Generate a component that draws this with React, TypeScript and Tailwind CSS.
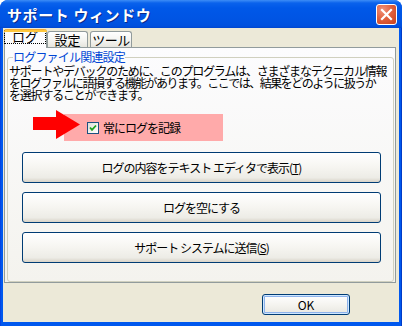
export default function App() {
  const btn =
    "flex items-center justify-center w-[359px] h-[31px] rounded-[3px] border border-[#003C74] bg-[linear-gradient(180deg,#FFFFFF_0%,#F7F6F2_45%,#EDECE6_85%,#D8D3C8_100%)] text-[12px] tracking-[-1px] leading-none text-black";
  return (
    <div className="relative w-[402px] h-[326px] bg-white font-['Noto_Sans_CJK_JP','Noto_Sans',sans-serif] text-black">
      <div className="flex flex-col h-full rounded-t-[8px] overflow-hidden bg-[linear-gradient(90deg,#0831D9_0px,#0058EE_1px,#0058EE_401px,#001EA0_402px)]">
        {/* Title bar */}
        <div className="h-[28px] shrink-0 flex items-center pl-[7px] pr-[5px] bg-[linear-gradient(180deg,#3D8DF6_0px,#0A62EC_3px,#0058E8_8px,#0054E3_20px,#0050DE_26px,#0045CE_28px)]">
          <span className="text-white font-bold text-[15px] leading-none tracking-[0.6px] [text-shadow:1px_1px_0_#0A2A8A]">
            サポート ウィンドウ
          </span>
          <div className="ml-auto w-[21px] h-[21px] rounded-[3px] border border-white bg-[radial-gradient(circle_at_30%_25%,#F0927A_0%,#E2623F_45%,#C8401A_100%)] flex items-center justify-center">
            <svg width="13" height="13" viewBox="0 0 13 13">
              <path d="M2 2 L11 11 M11 2 L2 11" stroke="white" strokeWidth="2.2" strokeLinecap="square" />
            </svg>
          </div>
        </div>
        {/* Body */}
        <div className="flex-1 mx-[3px] mb-[4px] bg-[#ECE9D8] flex flex-col">
          {/* Tabs */}
          <div className="relative z-10 flex items-end h-[19px] pl-[1px] pt-[1px]">
            <div className="relative w-[43px] h-[19px] -mb-[1px] rounded-t-[3px] border-x border-[#919B9C] bg-[#FCFCFE] flex items-start">
              <div className="absolute left-[-1px] right-[-1px] top-0 h-[3px] rounded-t-[3px] bg-[linear-gradient(180deg,#E68B2C_0px,#FFC73C_1px,#FFC73C_3px)]" />
              <span className="mt-[2px] ml-[0px] w-[40px] h-[12px] outline-1 outline-dotted outline-black text-[13px] leading-[12px] flex justify-center">
                ログ
              </span>
            </div>
            <div className="w-[41px] h-[16px] rounded-t-[3px] border border-b-0 border-[#919B9C] bg-[linear-gradient(180deg,#FFFFFF_0%,#F3F3EF_60%,#E6E5DE_100%)] text-[13px] leading-[14px] flex justify-center pt-[1px]">
              設定
            </div>
            <div className="ml-[2px] w-[42px] h-[16px] rounded-t-[3px] border border-b-0 border-[#919B9C] bg-[linear-gradient(180deg,#FFFFFF_0%,#F3F3EF_60%,#E6E5DE_100%)] text-[13px] tracking-[-0.5px] leading-[14px] flex justify-center pt-[1px]">
              ツール
            </div>
          </div>
          {/* Panel */}
          <div className="ml-[1px] w-[392px] h-[236px] border border-[#919B9C] bg-[linear-gradient(180deg,#FCFCFE_0%,#F4F3EE_100%)] pl-[2px] pt-[9px]">
            <div className="relative w-[387px] h-[225px] rounded-[3px] border border-[#D0D0BF]">
              <span className="absolute left-[5px] top-[-8px] bg-[#FBFBFC] text-[#0046D5] text-[12px] leading-[14px] tracking-[-0.8px]">
                ログファイル関連設定
              </span>
              <div className="pl-[1px] pt-[7px] text-[12px] leading-[12px] tracking-[-1.2px] whitespace-nowrap">
                <div>サポートやデバックのために、このプログラムは、さまざまなテクニカル情報</div>
                <div className="tracking-[-1.5px]">をログファルに語損する機能があります。ここでは、結果をどのように扱うか</div>
                <div>を選択することができます。</div>
              </div>
              <div className="mt-[13px] ml-[56px] w-[159px] h-[27px] bg-[#FFAAAA] flex items-center pl-[23px]">
                <div className="w-[12px] h-[12px] border border-[#1C5180] bg-[linear-gradient(135deg,#DCDCD7_0%,#F4F4F0_60%,#FFFFFF_100%)] flex items-center justify-center">
                  <svg width="8" height="8" viewBox="0 0 8 8">
                    <path d="M1 3.5 L3 5.8 L7 1.5" fill="none" stroke="#21A121" strokeWidth="1.8" />
                  </svg>
                </div>
                <span className="ml-[4px] text-[12px] tracking-[-1px] leading-none">常にログを記録</span>
              </div>
              <div className="mt-[11px] ml-[14px] flex flex-col gap-[9px]">
                <div className={btn}>
                  ログの内容をテキスト エディタで表示(<span className="underline">T</span>)
                </div>
                <div className={btn}>ログを空にする</div>
                <div className={btn}>
                  サポート システムに送信(<span className="underline">S</span>)
                </div>
              </div>
            </div>
          </div>
          {/* OK */}
          <div className="flex justify-end pr-[49px] mt-[11px]">
            <div className="w-[88px] h-[21px] rounded-[3px] border border-[#003C74] bg-[linear-gradient(180deg,#FFFFFF_0%,#F5F4F0_50%,#E8E7E0_100%)] shadow-[inset_0_0_0_1px_#CEE7FF,inset_0_0_0_2px_#8DB2EB] flex items-center justify-center text-[12px] leading-none">
              OK
            </div>
          </div>
        </div>
      </div>
      {/* Red arrow annotation */}
      <svg className="absolute left-[32px] top-[110px]" width="49" height="29" viewBox="0 0 49 29">
        <rect x="1" y="7" width="24" height="13" fill="#FF0000" />
        <polygon points="24,0 48,14.5 24,29" fill="#FF0000" />
      </svg>
    </div>
  );
}
